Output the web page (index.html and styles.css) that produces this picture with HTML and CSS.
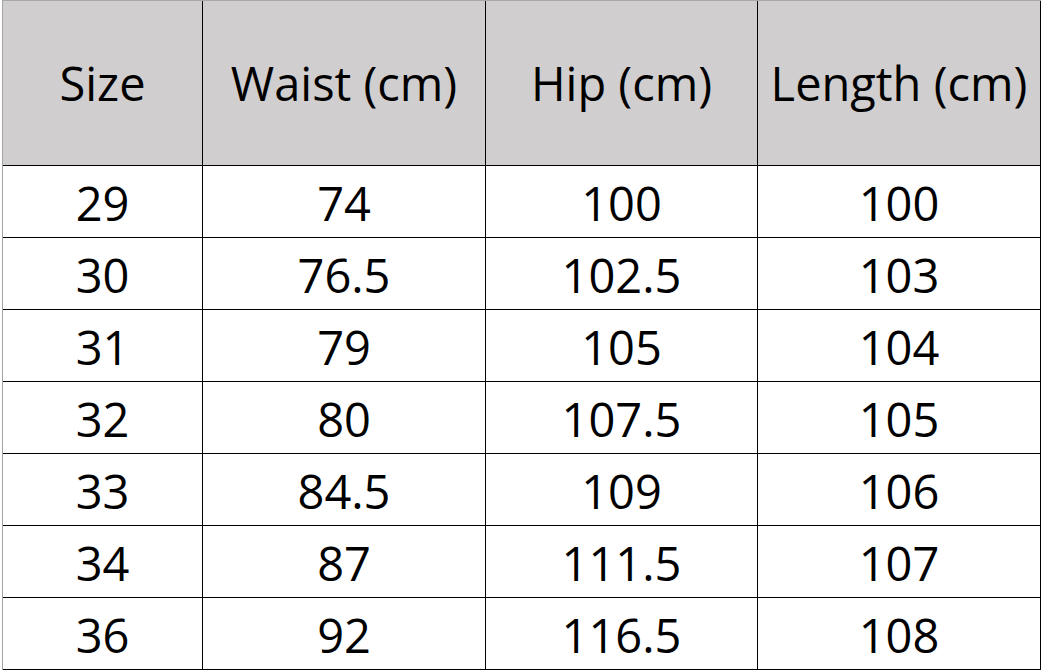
FILE: index.html
```html
<!DOCTYPE html>
<html>
<head>
<meta charset="utf-8">
<link rel="stylesheet" href="styles.css">
</head>
<body>
<div class="sheet">
  <div class="grid">
    <div class="cell head">Size</div>
    <div class="cell head">Waist (cm)</div>
    <div class="cell head">Hip (cm)</div>
    <div class="cell head">Length (cm)</div>

    <div class="cell">29</div><div class="cell">74</div><div class="cell">100</div><div class="cell">100</div>
    <div class="cell">30</div><div class="cell">76.5</div><div class="cell">102.5</div><div class="cell">103</div>
    <div class="cell">31</div><div class="cell">79</div><div class="cell">105</div><div class="cell">104</div>
    <div class="cell">32</div><div class="cell">80</div><div class="cell">107.5</div><div class="cell">105</div>
    <div class="cell">33</div><div class="cell">84.5</div><div class="cell">109</div><div class="cell">106</div>
    <div class="cell">34</div><div class="cell">87</div><div class="cell">111.5</div><div class="cell">107</div>
    <div class="cell">36</div><div class="cell">92</div><div class="cell">116.5</div><div class="cell">108</div>
  </div>
</div>
</body>
</html>
```
FILE: styles.css
```css
html, body {
  margin: 0;
  padding: 0;
  background: #ffffff;
}
.sheet {
  margin-left: 2px;
  border-left: 1px solid #a3a3a3;
  border-top: 1px solid #a8a8a8;
  width: 1038px;
  overflow: hidden;
}
.grid {
  display: grid;
  grid-template-columns: 199px 282px 271px 282px;
  grid-template-rows: 164px repeat(7, 71px);
  gap: 1px;
  padding: 0 1px 1px 0;
  background: #000000;
  font-family: "Open Sans", "Liberation Sans", sans-serif;
  font-size: 47px;
  color: #000000;
}
.cell {
  background: #ffffff;
  display: flex;
  align-items: center;
  justify-content: center;
  line-height: 1;
  padding-top: 3px;
  box-sizing: border-box;
  white-space: nowrap;
}
.head {
  background: #d0cece;
  padding-top: 1px;
}
```
